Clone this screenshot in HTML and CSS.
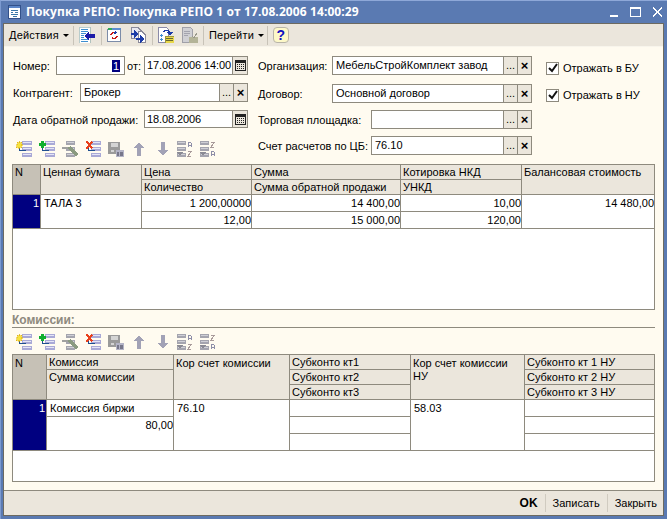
FILE: index.html
```html
<!DOCTYPE html>
<html lang="ru">
<head>
<meta charset="utf-8">
<title>Покупка РЕПО</title>
<link rel="stylesheet" href="styles.css">
</head>
<body>
<svg class="defs" width="0" height="0" aria-hidden="true">
  <defs>
    <g id="bars">
      <rect x="6" y="0" width="10" height="4" fill="#a9a9d6"/><rect x="7" y="1" width="8" height="1" fill="#e4e4f6"/>
      <rect x="6" y="6" width="10" height="4" fill="#a9a9d6"/><rect x="7" y="7" width="8" height="1" fill="#e4e4f6"/>
      <rect x="6" y="12" width="10" height="4" fill="#a9a9d6"/><rect x="7" y="13" width="8" height="1" fill="#e4e4f6"/>
      <path d="M3 4v5h7" fill="none" stroke="#1f4f8f"/>
    </g>
    <g id="barsg">
      <rect x="4" y="0" width="9" height="4" fill="#a4a4ae"/><rect x="5" y="1" width="7" height="1" fill="#cfcfd6"/>
      <rect x="4" y="6" width="9" height="4" fill="#a4a4ae"/><rect x="5" y="7" width="7" height="1" fill="#cfcfd6"/>
      <rect x="4" y="12" width="9" height="4" fill="#a4a4ae"/><rect x="5" y="13" width="7" height="1" fill="#cfcfd6"/>
    </g>
    <symbol id="i-new" viewBox="0 0 16 16"><use href="#bars"/><path d="M3 0l1 2 2-1-1 2 2 1-2 1 1 2-2-1-1 2-1-2-2 1 1-2-1-1 2-1-1-2 2 1z" fill="#f6e23c" stroke="#e0b000" stroke-width=".5"/></symbol>
    <symbol id="i-add" viewBox="0 0 16 16"><use href="#bars"/><path d="M2 0h3v2h2v3H5v2H2V5H0V2h2z" fill="#0fae2f"/></symbol>
    <symbol id="i-edit" viewBox="0 0 16 16"><use href="#barsg"/><rect x="0" y="6" width="8" height="2" fill="#a0a0a0"/><path d="M6 6l3-1 7 8-2 3-8-8z" fill="#8a9a80"/></symbol>
    <symbol id="i-del" viewBox="0 0 16 16"><use href="#bars"/><path d="M0 1l2-1 2 2 2-2 2 1-3 3 3 3-2 1-2-2-2 2-2-1 3-3z" fill="#e8401c"/></symbol>
    <symbol id="i-ok" viewBox="0 0 16 16"><rect x="0" y="1" width="12" height="12" fill="#9a9a9a"/><rect x="3" y="2" width="7" height="4" fill="#d4d4d4"/><rect x="3" y="9" width="3" height="2" fill="#d4d4d4"/><rect x="8" y="9" width="8" height="7" fill="#b4b4c6"/><rect x="9" y="11" width="2" height="4" fill="#77778a"/><rect x="12" y="11" width="3" height="4" fill="#77778a"/></symbol>
    <symbol id="i-up" viewBox="0 0 12 16"><path d="M6 1l5 6H8v8H4V7H1z" fill="#a2a2b6"/></symbol>
    <symbol id="i-down" viewBox="0 0 12 16"><path d="M4 1h4v8h3l-5 6-5-6h3z" fill="#a2a2b6"/></symbol>
    <g id="sortbars">
      <rect x="0" y="0" width="9" height="4" fill="#a4a4ae"/><rect x="0" y="6" width="9" height="4" fill="#a4a4ae"/><rect x="0" y="12" width="9" height="4" fill="#a4a4ae"/>
      <rect x="1" y="1" width="7" height="1" fill="#cfcfd6"/><rect x="1" y="7" width="7" height="1" fill="#cfcfd6"/><rect x="1" y="13" width="7" height="1" fill="#cfcfd6"/>
      <path d="M0 11l3 4 3-4z" fill="#8a8a94"/>
    </g>
    <symbol id="i-az" viewBox="0 0 16 16"><use href="#sortbars"/><path d="M11 6V2l1-1h1l1 1v4M11 4h3" fill="none" stroke="#8e8ea8"/><path d="M11 10h3v1l-3 4v0h3" fill="none" stroke="#a89a9a"/></symbol>
    <symbol id="i-za" viewBox="0 0 16 16"><use href="#sortbars"/><path d="M11 1h3v1l-3 4h3" fill="none" stroke="#a89a9a"/><path d="M11 15v-4l1-1h1l1 1v4M11 13h3" fill="none" stroke="#8e8ea8"/></symbol>
    <symbol id="i-cal" viewBox="0 0 11 11"><rect x="0" y="0" width="11" height="11" fill="#222"/><path d="M1 3h9v7H1z" fill="#ebe6dc"/><path d="M2 4h1v1H2zM4 4h1v1H4zM6 4h1v1H6zM8 4h1v1H8zM2 6h1v1H2zM4 6h1v1H4zM6 6h1v1H6zM8 6h1v1H8zM2 8h1v1H2zM4 8h1v1H4zM6 8h1v1H6zM8 8h1v1H8z" fill="#222"/></symbol>
  </defs>
</svg>

<div class="window">
  <header class="title">
    <svg class="title-icon" width="13" height="14" viewBox="0 0 13 14"><rect x=".5" y=".5" width="12" height="13" fill="#fff" stroke="#33518a"/><rect x="1" y="1" width="11" height="2" fill="#5d86c8"/><path d="M3 5h7M3 7h2M7 7h3M3 9h7M5 11h4" stroke="#3a78a8"/></svg>
    <span class="title-text">Покупка РЕПО: Покупка РЕПО 1 от 17.08.2006 14:00:29</span>
    <span class="winbtns">
      <svg width="10" height="12" viewBox="0 0 10 12"><rect x="0" y="9" width="8" height="2" fill="#fff"/></svg>
      <svg width="13" height="12" viewBox="0 0 13 12"><path d="M1.5 1.5h10v9h-10z" fill="none" stroke="#fff"/><rect x="1" y="1" width="11" height="2" fill="#fff"/></svg>
      <svg width="13" height="12" viewBox="0 0 13 12"><path d="M2 1.5l9 9M11 1.5l-9 9" stroke="#fff" stroke-width="2"/></svg>
    </span>
  </header>

  <div class="client">
    <nav class="toolbar">
      <span class="menu menu-a">Действия<i class="caret"></i></span>
      <i class="sep"></i>
      <svg class="tb" width="16" height="16" viewBox="0 0 16 16"><rect x="0" y="0" width="11" height="16" fill="#fff" stroke="#8aa" stroke-width=".6"/><path d="M2 2h7M2 4h7M2 6h5M2 8h3M2 10h3M2 12h7M2 14h7" stroke="#3f8fd0"/><path d="M5 9l5-4v2h6v4h-6v2z" fill="#1c1ca8"/></svg>
      <i class="sep"></i>
      <svg class="tb tb-b" width="14" height="14" viewBox="0 0 14 14"><rect x=".5" y="1.5" width="13" height="12" fill="#fff" stroke="#7c8ca8"/><rect x="1" y="0" width="4" height="2" fill="#2fa85a"/><rect x="5" y="0" width="9" height="2" fill="#5c8cd0"/><path d="M4 7a3 3 0 0 1 5-2M10 8a3 3 0 0 1-5 2" fill="none" stroke="#c81818" stroke-width="1.4"/><path d="M8 3l2 2-3 1z" fill="#1c3ca8"/></svg>
      <svg class="tb tb-c" width="16" height="16" viewBox="0 0 16 16"><path d="M1 .5h7l3 3v8H1z" fill="#e8e8f0" stroke="#8a8a9a"/><path d="M8 4.500h4l3 3v8H8z" fill="#fff" stroke="#8a8a9a"/><path d="M1 6h3V3l5 4-5 4V8H1z" fill="#1c3ca8"/><path d="M6 11h4V8l5 4-5 4v-3H6z" fill="#1c3ca8"/></svg>
      <i class="sep"></i>
      <svg class="tb tb-d" width="16" height="16" viewBox="0 0 16 16"><path d="M.5.5h8l2 2v13H.5z" fill="#fff" stroke="#8a8aa8"/><path d="M2 8h3M3.500 6.500v3M2 12h3M3.500 10.500v3" stroke="#3f8fd0"/><path d="M4 5a5 4 0 0 1 9 0h2l-3 4-3-4h2a3 2 0 0 0-5 0z" fill="#1c3ca8"/><rect x="7" y="9" width="9" height="7" fill="#e8d84a" stroke="#6a6a30" stroke-width=".6"/><path d="M8 11h7M8 13h7" stroke="#6a6a30"/></svg>
      <svg class="tb tb-e" width="16" height="16" viewBox="0 0 16 16"><path d="M.5.500h8l2 2v13H.5z" fill="#d0d0d4" stroke="#a0a0a8"/><path d="M2 4h6M2 6h6M2 8h4" stroke="#a4a4ae"/><rect x="7" y="10" width="9" height="6" fill="#b4b498"/><path d="M10 9l2 2 3-5" fill="none" stroke="#98988a"/></svg>
      <i class="sep sep-d"></i>
      <span class="menu menu-b">Перейти<i class="caret"></i></span>
      <i class="sep"></i>
      <span class="help">?</span>
    </nav>

    <main class="form">
      <section class="top">
        <div class="col-left">
          <div class="row r-1">
            <label class="lab lab-num">Номер:</label>
            <span class="field f-num"><span class="num-sel">1</span></span>
            <label class="lab lab-ot">от:</label>
            <span class="field f-date"><span class="val">17.08.2006 14:00</span><span class="btn btn-cal"><svg width="11" height="11"><use href="#i-cal"/></svg></span></span>
          </div>
          <div class="row r-2">
            <label class="lab lab-ka">Контрагент:</label>
            <span class="field f-ka"><span class="val">Брокер</span><span class="btn">...</span><span class="btn btn-x">×</span></span>
          </div>
          <div class="row r-3">
            <label class="lab lab-dt">Дата обратной продажи:</label>
            <span class="field f-date"><span class="val">18.08.2006</span><span class="btn btn-cal"><svg width="11" height="11"><use href="#i-cal"/></svg></span></span>
          </div>
          <div class="icons icons-1">
            <svg width="16" height="16"><use href="#i-new"/></svg>
            <svg width="16" height="16"><use href="#i-add"/></svg>
            <svg width="16" height="16"><use href="#i-edit"/></svg>
            <svg width="16" height="16"><use href="#i-del"/></svg>
            <svg width="16" height="16"><use href="#i-ok"/></svg>
            <svg class="arr-up" width="12" height="16"><use href="#i-up"/></svg>
            <svg class="arr-dn" width="12" height="16"><use href="#i-down"/></svg>
            <svg class="srt-a" width="16" height="16"><use href="#i-az"/></svg>
            <svg width="16" height="16"><use href="#i-za"/></svg>
          </div>
        </div>

        <div class="col-mid">
          <div class="row m-1">
            <label class="lab lab-m1">Организация:</label>
            <span class="field f-m"><span class="val">МебельСтройКомплект завод</span><span class="btn">...</span><span class="btn btn-x">×</span></span>
          </div>
          <div class="row m-2">
            <label class="lab lab-m1">Договор:</label>
            <span class="field f-m"><span class="val">Основной договор</span><span class="btn">...</span><span class="btn btn-x">×</span></span>
          </div>
          <div class="row m-3">
            <label class="lab lab-m2">Торговая площадка:</label>
            <span class="field f-s"><span class="val"></span><span class="btn">...</span><span class="btn btn-x">×</span></span>
          </div>
          <div class="row m-4">
            <label class="lab lab-m2">Счет расчетов по ЦБ:</label>
            <span class="field f-s"><span class="val">76.10</span><span class="btn">...</span><span class="btn btn-x">×</span></span>
          </div>
        </div>

        <div class="col-right">
          <div class="chk"><span class="box"><svg width="10" height="10" viewBox="0 0 10 10"><path d="M1 5l3 3 5-7" fill="none" stroke="#111" stroke-width="2"/></svg></span>Отражать в БУ</div>
          <div class="chk chk-2"><span class="box"><svg width="10" height="10" viewBox="0 0 10 10"><path d="M1 5l3 3 5-7" fill="none" stroke="#111" stroke-width="2"/></svg></span>Отражать в НУ</div>
        </div>
      </section>

      <section class="grid grid-a">
        <div class="c h n s2">N</div>
        <div class="c h s2">Ценная бумага</div>
        <div class="c h">Цена</div>
        <div class="c h">Сумма</div>
        <div class="c h">Котировка НКД</div>
        <div class="c h s2 last">Балансовая стоимость</div>
        <div class="c h">Количество</div>
        <div class="c h">Сумма обратной продажи</div>
        <div class="c h">УНКД</div>

        <div class="c d num s2">1</div>
        <div class="c d s2">ТАЛА 3</div>
        <div class="c d r">1 200,00000</div>
        <div class="c d r">14 400,00</div>
        <div class="c d r">10,00</div>
        <div class="c d r s2 last">14 480,00</div>
        <div class="c d r">12,00</div>
        <div class="c d r">15 000,00</div>
        <div class="c d r">120,00</div>
      </section>

      <div class="sect-title">Комиссии:</div>
      <div class="icons icons-2">
        <svg width="16" height="16"><use href="#i-new"/></svg>
        <svg width="16" height="16"><use href="#i-add"/></svg>
        <svg width="16" height="16"><use href="#i-edit"/></svg>
        <svg width="16" height="16"><use href="#i-del"/></svg>
        <svg width="16" height="16"><use href="#i-ok"/></svg>
        <svg class="arr-up" width="12" height="16"><use href="#i-up"/></svg>
        <svg class="arr-dn" width="12" height="16"><use href="#i-down"/></svg>
        <svg class="srt-a" width="16" height="16"><use href="#i-az"/></svg>
        <svg width="16" height="16"><use href="#i-za"/></svg>
      </div>

      <section class="grid grid-b">
        <div class="c h n s3">N</div>
        <div class="c h">Комиссия</div>
        <div class="c h s3">Кор счет комиссии</div>
        <div class="c h">Субконто кт1</div>
        <div class="c h s3">Кор счет комиссии НУ</div>
        <div class="c h last">Субконто кт 1 НУ</div>
        <div class="c h s2">Сумма комиссии</div>
        <div class="c h">Субконто кт2</div>
        <div class="c h last">Субконто кт 2 НУ</div>
        <div class="c h">Субконто кт3</div>
        <div class="c h last">Субконто кт 3 НУ</div>

        <div class="c d num s3">1</div>
        <div class="c d">Комиссия биржи</div>
        <div class="c d s3">76.10</div>
        <div class="c d"></div>
        <div class="c d s3">58.03</div>
        <div class="c d last"></div>
        <div class="c d r s2">80,00</div>
        <div class="c d"></div>
        <div class="c d last"></div>
        <div class="c d"></div>
        <div class="c d last"></div>
      </section>
    </main>

    <footer class="status">
      <span class="st-btn st-ok">OK</span>
      <i class="st-sep"></i>
      <span class="st-btn">Записать</span>
      <i class="st-sep"></i>
      <span class="st-btn">Закрыть</span>
    </footer>
  </div>
</div>
</body>
</html>
```

FILE: styles.css
```css
* { box-sizing: border-box; }
html, body { margin: 0; padding: 0; }
body { width: 667px; height: 519px; overflow: hidden; background: #5a7ab2; font: 11px/14px "Liberation Sans", Arial, sans-serif; color: #000; }
.defs { position: absolute; }
svg { display: block; flex: none; shape-rendering: crispEdges; }
i { font-style: normal; display: block; flex: none; }

.window { width: 667px; height: 519px; display: flex; flex-direction: column; background: #5a7ab2; padding: 0 3px 3px; border-top: 1px solid #8ea8d8; border-left: 1px solid #7c9ad0; }

.title { height: 22px; flex: none; display: flex; align-items: center; color: #fff; padding-left: 4px; }
.title-icon { margin-right: 5px; }
.title-text { font: bold 12px/16px "Open Sans", "DejaVu Sans", sans-serif; letter-spacing: .1px; white-space: nowrap; }
.winbtns { margin-left: auto; display: flex; gap: 9px; align-items: center; }

.client { flex: 1; min-height: 0; display: flex; flex-direction: column; border: 1px solid #6d6a60; background: #ebe6dc; margin-left: -1px; }

.toolbar { height: 23px; flex: none; display: flex; align-items: center; background: #ebe6dc; padding-left: 5px; border-bottom: 1px solid #f8f5ec; letter-spacing: .2px; }
.menu { display: flex; align-items: center; white-space: nowrap; }
.menu-a { width: 58px; }
.menu-b { width: 52px; }
.caret { width: 0; height: 0; border: 3px solid transparent; border-top: 3px solid #000; border-bottom: 0; margin-left: 4px; }
.sep { width: 1px; height: 19px; background: #c8c3b8; margin: 0 5px 0 6px; }
.sep-d { margin-left: 5px; }
.tb-c { margin-left: 9px; }
.tb-e { margin-left: 8px; }
.help { width: 16px; height: 16px; border: 1px solid #b8b4a8; border-radius: 4px; background: #fdf8c8; color: #1010c0; font: bold 14px/14px "Liberation Sans", sans-serif; text-align: center; }

.form { flex: 1; min-height: 0; background: #fffbf0; padding: 9px 8px 0; }
.top { display: flex; height: 108px; }
.col-left { width: 236px; }
.col-mid { width: 275px; margin-left: 9px; }
.col-right { margin-left: 14px; padding-top: 5px; }
.row { display: flex; align-items: center; height: 19px; }
.r-2 { margin-top: 8px; }
.r-3 { margin-top: 8px; height: 18px; }
.m-2 { margin-top: 9px; }
.m-3 { margin-top: 7px; }
.m-4 { margin-top: 7px; }

.lab { flex: none; white-space: nowrap; padding: 1px 0 0 1px; }
.lab-num { width: 44px; }
.lab-ot { width: 19px; padding-left: 2px; }
.lab-ka { width: 68px; }
.lab-dt { width: 132px; }
.lab-m1 { width: 75px; }
.lab-m2 { width: 114px; }

.field { display: flex; height: 100%; background: #fff; border: 1px solid #8e8a7e; flex: none; }
.val { flex: 1; min-width: 0; padding: 0 3px; line-height: 17px; white-space: nowrap; overflow: hidden; }
.btn { width: 14px; flex: none; background: #ebe6dc; border-left: 1px solid #8e8a7e; text-align: center; line-height: 17px; display: flex; align-items: center; justify-content: center; }
.btn-x { font: bold 13px/15px "Liberation Sans", sans-serif; }
.btn-cal { width: 15px; }
.f-num { width: 69px; justify-content: flex-end; padding: 3px 4px 2px 0; }
.num-sel { background: #000080; color: #fff; padding: 0 1px; line-height: 12px; height: 12px; }
.f-date { width: 104px; }
.f-date .val { padding: 0 0 0 2px; letter-spacing: -.1px; }
.f-ka { width: 168px; }
.f-m { width: 200px; }
.f-s { width: 161px; }

.chk { display: flex; align-items: center; height: 14px; white-space: nowrap; }
.chk-2 { margin-top: 13px; }
.box { width: 13px; height: 13px; background: #fff; border: 1px solid #8e8a7e; margin-right: 4px; display: flex; align-items: center; justify-content: center; }
.box svg { shape-rendering: auto; }

.icons { display: flex; align-items: center; padding-left: 4px; gap: 7px; height: 16px; }
.icons-1 { margin-top: 13px; }
.icons-2 { margin-top: 6px; }
.arr-up { margin-left: 2px; }
.arr-dn { margin-left: 5px; }
.srt-a { margin-left: 1px; }

.grid { display: grid; width: 643px; border: 1px solid #8e8a7e; background: #fff; }
.grid-a { height: 146px; grid-template-columns: 28px 101px 110px 149px 121px 132px; grid-template-rows: 15px 15px 17px 17px 1fr; }
.grid-b { height: 128px; margin-top: 4px; grid-template-columns: 34px 127px 116px 121px 114px 129px; grid-template-rows: 15px 15px 15px 17px 17px 17px 1fr; }

.c { border-right: 1px solid #8e8a7e; border-bottom: 1px solid #8e8a7e; white-space: nowrap; overflow: hidden; }
.h { background: #ebe6dc; padding-left: 2px; line-height: 15px; }
.n { background: #c6c1b6; }
.d { padding-left: 3px; line-height: 17px; }
.r { text-align: right; }
.num { background: #000080; color: #fff; text-align: right; padding-right: 1px; }
.last { border-right: 0; }
.s2 { grid-row: span 2; }
.s3 { grid-row: span 3; white-space: normal; }
.h.s3 { line-height: 13px; padding-top: 2px; }

.sect-title { height: 18px; padding-top: 3px; width: 643px; font-size: 12px; font-weight: bold; color: #8e8a7e; line-height: 14px; border-bottom: 1px solid #8e8a7e; }

.status { height: 25px; flex: none; border-top: 1px solid #8e8a7e; background: #ebe6dc; display: flex; align-items: center; justify-content: flex-end; padding-right: 6px; }
.st-btn { white-space: nowrap; }
.st-ok { font-weight: bold; font-size: 12px; }
.st-sep { width: 1px; height: 18px; background: #d0cbc0; margin: 0 7px; }
```
